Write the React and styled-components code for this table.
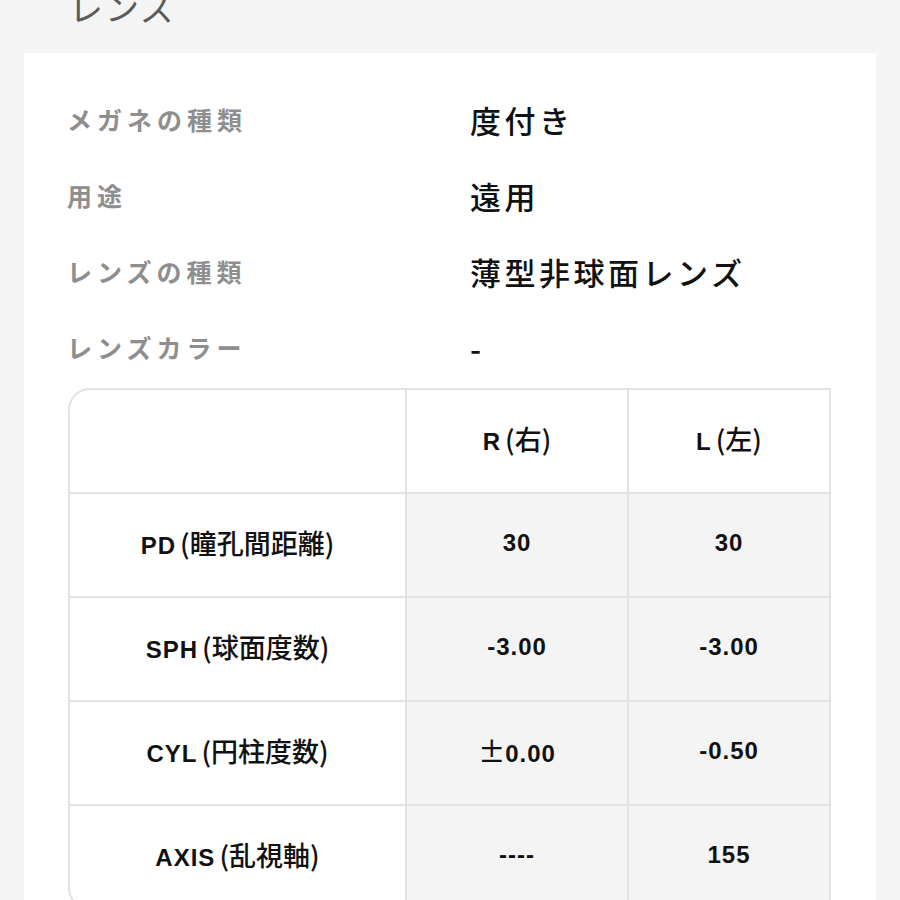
import React from "react";
import styled, { createGlobalStyle } from "styled-components";

const GlobalStyle = createGlobalStyle`
  html, body {
    margin: 0;
    padding: 0;
    background: #f4f4f4;
    overflow: hidden;
  }
  body {
    font-family: "Noto Sans CJK JP", "Noto Sans", sans-serif;
  }
`;

const Page = styled.div`
  width: 900px;
  height: 900px;
  overflow: hidden;
  background: #f4f4f4;
`;

const Title = styled.h2`
  margin: -18px 0 0 0;
  padding: 0 0 0 69px;
  height: 71px;
  font-size: 34px;
  line-height: 50px;
  font-weight: 400;
  letter-spacing: 2px;
  color: #5a5a5a;
`;

const Card = styled.section`
  margin: 0 24px;
  background: #fff;
  padding: 29px 45px 0 43px;
  height: 900px;
`;

const InfoRow = styled.div`
  display: grid;
  grid-template-columns: 403px 1fr;
  align-items: baseline;
  height: 76px;
  padding-top: 12px;
  box-sizing: border-box;
`;

const Label = styled.div`
  font-size: 25px;
  font-weight: 700;
  letter-spacing: 5px;
  color: #8e8e8e;
`;

const Value = styled.div`
  font-size: 31px;
  font-weight: 500;
  letter-spacing: 3.5px;
  color: #111;
  transform: translateY(3px);
`;

const Grid = styled.div`
  margin: 2px 0 0 1px;
  display: grid;
  grid-template-columns: 335px 220px 200px;
  grid-auto-rows: 102px;
  gap: 2px;
  background: #e2e2e2;
  border: 2px solid #e2e2e2;
  border-radius: 22px 0 0 22px;
  overflow: hidden;
  width: max-content;
`;

const Cell = styled.div`
  display: flex;
  align-items: center;
  justify-content: center;
  background: ${(p) => (p.$shade ? "#f4f4f4" : "#fff")};
  font-family: "Liberation Sans", "Noto Sans CJK JP", sans-serif;
  font-size: 24px;
  font-weight: 700;
  letter-spacing: 1px;
  color: #111;
  padding-bottom: 4px;
  box-sizing: border-box;
`;

const CellText = styled.span`
  white-space: nowrap;
  line-height: 1;
`;

const Jp = styled.span`
  font-family: "Noto Sans CJK JP", sans-serif;
  font-size: 27px;
  font-weight: 500;
  letter-spacing: 0;
  margin-left: ${(p) => (p.$tight ? "0" : "4px")};
`;

const info = [
  ["メガネの種類", "度付き"],
  ["用途", "遠用"],
  ["レンズの種類", "薄型非球面レンズ"],
  ["レンズカラー", "-"],
];

const rows = [
  ["PD", "瞳孔間距離", "30", "30"],
  ["SPH", "球面度数", "-3.00", "-3.00"],
  ["CYL", "円柱度数", "±0.00", "-0.50"],
  ["AXIS", "乱視軸", "----", "155"],
];

const Head = ({ en, jp }) => (
  <CellText>
    {en}
    <Jp>({jp})</Jp>
  </CellText>
);

const Num = ({ v }) =>
  v.startsWith("±") ? (
    <CellText>
      <Jp $tight>±</Jp>
      {v.slice(1)}
    </CellText>
  ) : (
    <CellText>{v}</CellText>
  );

export default function App() {
  return (
    <Page>
      <GlobalStyle />
      <Title>レンズ</Title>
      <Card>
        {info.map(([k, v]) => (
          <InfoRow key={k}>
            <Label>{k}</Label>
            <Value>{v}</Value>
          </InfoRow>
        ))}
        <Grid>
          <Cell />
          <Cell>
            <Head en="R" jp="右" />
          </Cell>
          <Cell>
            <Head en="L" jp="左" />
          </Cell>
          {rows.map(([en, jp, r, l]) => (
            <React.Fragment key={en}>
              <Cell>
                <Head en={en} jp={jp} />
              </Cell>
              <Cell $shade>
                <Num v={r} />
              </Cell>
              <Cell $shade>
                <Num v={l} />
              </Cell>
            </React.Fragment>
          ))}
        </Grid>
      </Card>
    </Page>
  );
}
